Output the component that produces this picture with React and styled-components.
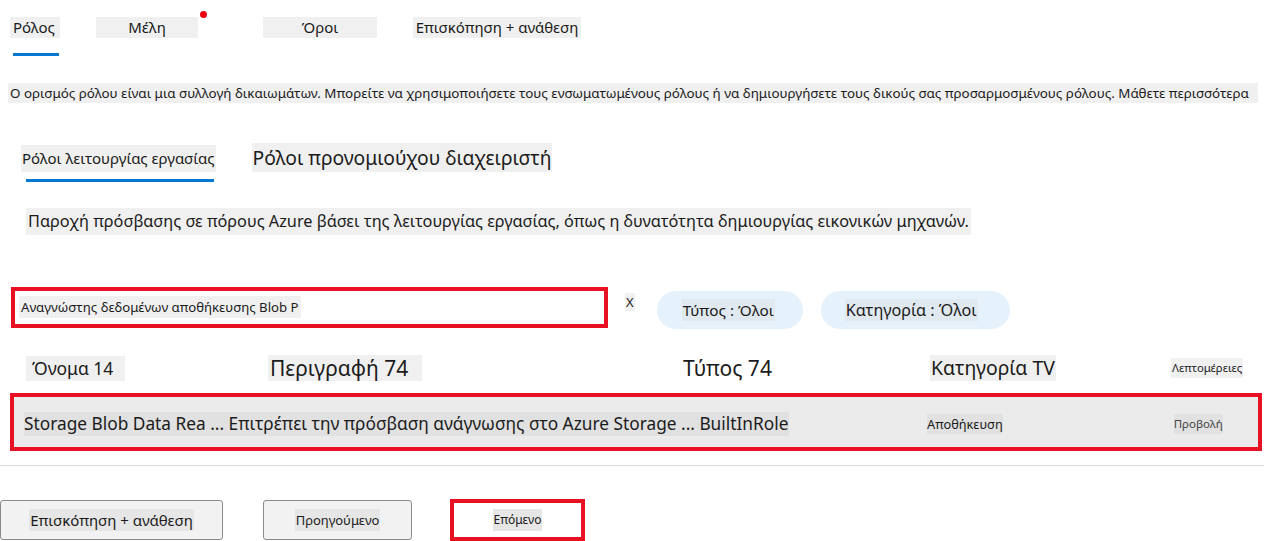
import React from 'react'
import styled, { createGlobalStyle } from 'styled-components'

const GlobalStyle = createGlobalStyle`
  body {
    margin: 0;
    background: #ffffff;
    font-family: "Noto Sans", "Open Sans", sans-serif;
    color: #1b1b1b;
  }
`;

const Page = styled.div`
  width: 1264px;
  height: 541px;
  overflow: hidden;
  display: flex;
  flex-direction: column;
`;

const TabBar = styled.div`
  display: flex;
  align-items: flex-start;
  padding: 17px 0 0 10px;
  height: 39px;
`;

const Tab = styled.div`
  position: relative;
  width: ${p => p.$w}px;
  margin-right: ${p => p.$gap || 0}px;
  display: flex;
  flex-direction: column;
  align-items: ${p => (p.$left ? 'flex-start' : 'center')};
`;

const TabLabel = styled.span`
  display: block;
  width: 100%;
  height: 21px;
  line-height: 21px;
  font-size: 15px;
  background: #f0f0f0;
  text-align: ${p => (p.$left ? 'left' : 'center')};
  padding-left: ${p => (p.$left ? 3 : 0)}px;
  box-sizing: border-box;
  white-space: nowrap;
`;

const TabLine = styled.div`
  margin-top: 15px;
  margin-left: 3px;
  width: 46px;
  height: 3px;
  background: #0078d4;
`;

const Dot = styled.span`
  position: absolute;
  right: -9px;
  top: -6px;
  width: 7px;
  height: 7px;
  border-radius: 50%;
  background: #e8000f;
`;

const Intro = styled.p`
  margin: 27px 6px 0 8px;
  padding: 0 2px;
  height: 20px;
  line-height: 20px;
  font-size: 13.4px;
  background: #f0f0f0;
  white-space: nowrap;
  overflow: hidden;
`;

const SubTabs = styled.div`
  display: flex;
  align-items: flex-start;
  margin-top: 40px;
  padding-left: 21px;
  gap: 36px;
`;

const SubTab = styled.div`
  display: flex;
  flex-direction: column;
`;

const SubLabel = styled.span`
  display: inline-block;
  background: #f0f0f0;
  font-size: ${p => p.$size}px;
  height: ${p => p.$h}px;
  line-height: ${p => p.$h}px;
  padding: 0 ${p => p.$pad}px;
  margin-top: ${p => p.$top || 0}px;
  white-space: nowrap;
`;

const SubLine = styled.div`
  margin: 7px 0 0 5px;
  width: 188px;
  height: 3px;
  background: #0078d4;
`;

const Lead = styled.p`
  margin: 26px 0 0 26px;
  align-self: flex-start;
  background: #f0f0f0;
  font-size: 16.3px;
  height: 27px;
  line-height: 27px;
  padding: 0 2px;
  white-space: nowrap;
`;

const FilterRow = styled.div`
  display: flex;
  align-items: center;
  margin-top: 52px;
  padding-left: 11px;
  height: 40px;
`;

const SearchBox = styled.div`
  box-sizing: border-box;
  width: 597px;
  height: 41px;
  border: 4px solid #e81123;
  display: flex;
  align-items: center;
  padding-left: 4px;
`;

const SearchText = styled.span`
  background: #f0f0f0;
  font-size: 13.2px;
  height: 22px;
  line-height: 22px;
  padding: 0 2px;
  white-space: nowrap;
`;

const Clear = styled.span`
  margin: -10px 0 0 17px;
  font-size: 13px;
  background: #f0f0f0;
  padding: 0 1px;
`;

const Pill = styled.div`
  margin: 6px 0 0 ${p => p.$ml}px;
  width: ${p => p.$w}px;
  height: 38px;
  border-radius: 19px;
  background: #e5f1fb;
  display: flex;
  align-items: center;
  padding-left: ${p => p.$pl}px;
  box-sizing: border-box;
`;

const PillText = styled.span`
  background: #e0e8f0;
  font-size: ${p => p.$size}px;
  height: 22px;
  line-height: 22px;
  padding: 0 1px;
  white-space: nowrap;
`;

const HeaderRow = styled.div`
  display: grid;
  grid-template-columns: 242px 415px 247px 240px 1fr;
  align-items: center;
  margin-top: 28px;
  padding-left: 26px;
  height: 26px;
`;

const HeadCell = styled.span`
  justify-self: start;
  margin-left: ${p => p.$ml || 0}px;
  background: ${p => (p.$plain ? 'transparent' : '#f0f0f0')};
  font-size: ${p => p.$size}px;
  height: ${p => p.$h || 26}px;
  line-height: ${p => p.$h || 26}px;
  padding: 0 ${p => p.$pr ?? 1}px 0 ${p => p.$pl ?? 1}px;
  white-space: nowrap;
`;

const DataRow = styled.div`
  box-sizing: border-box;
  margin: 12px 2px 0 10px;
  height: 58px;
  border: 4px solid #e81123;
  background: #ebebeb;
  display: flex;
  align-items: center;
  padding: 4px 0 0 10px;
`;

const RowMain = styled.span`
  background: #e1e1e1;
  font-size: 17.3px;
  height: 24px;
  line-height: 24px;
  white-space: nowrap;
  width: 765px;
`;

const RowCell = styled.span`
  margin-left: ${p => p.$ml}px;
  background: #e1e1e1;
  font-size: ${p => p.$size}px;
  height: 20px;
  line-height: 20px;
  white-space: nowrap;
  color: ${p => p.$muted ? '#444' : '#1b1b1b'};
`;

const Divider = styled.hr`
  margin: 14px 0 0 0;
  border: none;
  border-top: 1px solid #dcdcdc;
`;

const Footer = styled.div`
  display: flex;
  align-items: center;
  margin-top: 33px;
`;

const Button = styled.button`
  box-sizing: border-box;
  margin-left: ${p => p.$ml}px;
  width: ${p => p.$w}px;
  height: 40px;
  border: 1px solid #8a8a8a;
  border-radius: 3px;
  background: #f2f2f2;
  font-family: "Noto Sans", "Open Sans", sans-serif;
  color: #1b1b1b;
  display: flex;
  align-items: center;
  justify-content: center;
  padding: 0;
`;

const ButtonText = styled.span`
  background: #e6e6e6;
  font-size: ${p => p.$size}px;
  line-height: 22px;
  height: 22px;
  padding: 0 1px;
`;

const NextButton = styled(Button)`
  height: 42px;
  border: 4px solid #e81123;
  border-radius: 0;
  background: #ffffff;
`;

export default function App() {
  return (
    <Page>
      <GlobalStyle />
      <TabBar>
        <Tab $w={50} $gap={36} $left>
          <TabLabel $left>Ρόλος</TabLabel>
          <TabLine />
        </Tab>
        <Tab $w={102} $gap={65}>
          <TabLabel>Μέλη</TabLabel>
          <Dot />
        </Tab>
        <Tab $w={114} $gap={36}>
          <TabLabel>Όροι</TabLabel>
        </Tab>
        <Tab $w={168}>
          <TabLabel>Επισκόπηση + ανάθεση</TabLabel>
        </Tab>
      </TabBar>

      <Intro>
        Ο ορισμός ρόλου είναι μια συλλογή δικαιωμάτων. Μπορείτε να χρησιμοποιήσετε τους ενσωματωμένους ρόλους ή να δημιουργήσετε τους δικούς σας προσαρμοσμένους ρόλους. Μάθετε περισσότερα
      </Intro>

      <SubTabs>
        <SubTab>
          <SubLabel $size={15} $h={27} $pad={1} $top={2}>Ρόλοι λειτουργίας εργασίας</SubLabel>
          <SubLine />
        </SubTab>
        <SubTab>
          <SubLabel $size={19.3} $h={29} $pad={1}>Ρόλοι προνομιούχου διαχειριστή</SubLabel>
        </SubTab>
      </SubTabs>

      <Lead>
        Παροχή πρόσβασης σε πόρους Azure βάσει της λειτουργίας εργασίας, όπως η δυνατότητα δημιουργίας εικονικών μηχανών.
      </Lead>

      <FilterRow>
        <SearchBox>
          <SearchText>Αναγνώστης δεδομένων αποθήκευσης Blob P</SearchText>
        </SearchBox>
        <Clear>X</Clear>
        <Pill $ml={22} $w={146} $pl={25}>
          <PillText $size={15.3}>Τύπος : Όλοι</PillText>
        </Pill>
        <Pill $ml={18} $w={189} $pl={24}>
          <PillText $size={16.2}>Κατηγορία : Όλοι</PillText>
        </Pill>
      </FilterRow>

      <HeaderRow>
        <HeadCell $size={17.5} $h={25} $pl={6} $pr={12}>Όνομα 14</HeadCell>
        <HeadCell $size={21} $pl={2} $pr={14}>Περιγραφή 74</HeadCell>
        <HeadCell $size={21} $plain $pl={0} $pr={0}>Τύπος 74</HeadCell>
        <HeadCell $size={19.4}>Κατηγορία TV</HeadCell>
        <HeadCell $size={11.3} $ml={1} $h={20}>Λεπτομέρειες</HeadCell>
      </HeaderRow>

      <DataRow>
        <RowMain>Storage Blob Data Rea ... Επιτρέπει την πρόσβαση ανάγνωσης στο Azure Storage ... BuiltInRole</RowMain>
        <RowCell $ml={138} $size={12.8}>Αποθήκευση</RowCell>
        <RowCell $ml={171} $size={11.5} $muted>Προβολή</RowCell>
      </DataRow>

      <Divider />

      <Footer>
        <Button $ml={0} $w={223}>
          <ButtonText $size={15}>Επισκόπηση + ανάθεση</ButtonText>
        </Button>
        <Button $ml={40} $w={149}>
          <ButtonText $size={13}>Προηγούμενο</ButtonText>
        </Button>
        <NextButton $ml={38} $w={135}>
          <ButtonText $size={12}>Επόμενο</ButtonText>
        </NextButton>
      </Footer>
    </Page>
  )
}
